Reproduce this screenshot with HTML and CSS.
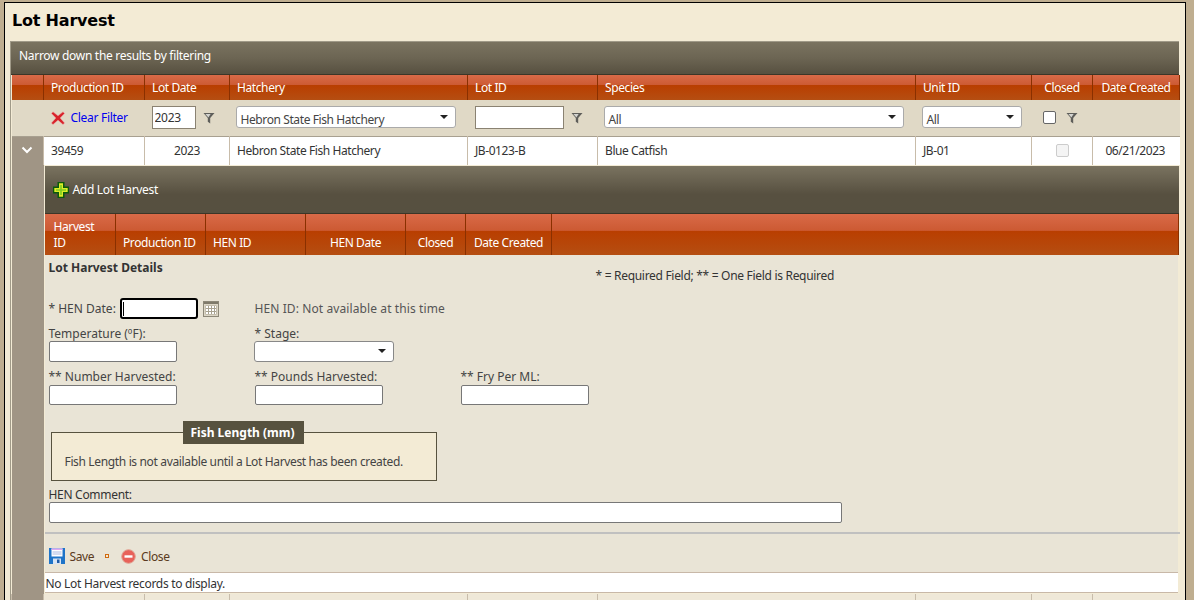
FILE: index.html
```html
<!DOCTYPE html>
<html lang="en">
<head>
    <meta charset="UTF-8">
    <title>Lot Harvest</title>
    <link rel="stylesheet" href="styles.css">
</head>
<body>
<div class="page">
    <h1 class="page-title">Lot Harvest</h1>
    <div class="grid">
        <div class="grid-caption">Narrow down the results by filtering</div>
        <table class="main-table">
            <colgroup>
                <col class="c-exp"><col class="c-prod"><col class="c-date"><col class="c-hatch"><col class="c-lot"><col class="c-species"><col class="c-unit"><col class="c-closed"><col class="c-created">
            </colgroup>
            <tr class="head-row">
                <th></th>
                <th>Production ID</th>
                <th>Lot Date</th>
                <th>Hatchery</th>
                <th>Lot ID</th>
                <th>Species</th>
                <th>Unit ID</th>
                <th class="center">Closed</th>
                <th class="center">Date Created</th>
            </tr>
            <tr class="filter-row">
                <td></td>
                <td>
                    <a class="clear-link" href="#">
                        <svg width="14" height="14" viewBox="0 0 14 14"><path d="M2 .8 L7 4.8 L12 .8 L13.6 2.4 L9.2 7 L13.6 12 L12 13.6 L7 9.2 L2 13.6 L.4 12 L4.8 7 L.4 2.4 Z" fill="#d8232a" stroke="#eeb0b0" stroke-width=".5"/></svg>
                        Clear Filter
                    </a>
                </td>
                <td>
                    <div class="filter-cell">
                        <input class="filter-input year" type="text" value="2023">
                        <svg class="funnel" width="12" height="12" viewBox="0 0 12 12"><path d="M.5 1 H11.5 L7.2 6 V11.5 L4.8 9.8 V6 Z" fill="#5e5e5a"/><path d="M2.4 2 H7.6 L5.4 5.6 Z" fill="#d4d4d0"/></svg>
                    </div>
                </td>
                <td><div class="combo hatch-combo"><span>Hebron State Fish Hatchery</span><i class="arrow"></i></div></td>
                <td>
                    <div class="filter-cell">
                        <input class="filter-input lot" type="text">
                        <svg class="funnel" width="12" height="12" viewBox="0 0 12 12"><path d="M.5 1 H11.5 L7.2 6 V11.5 L4.8 9.8 V6 Z" fill="#5e5e5a"/><path d="M2.4 2 H7.6 L5.4 5.6 Z" fill="#d4d4d0"/></svg>
                    </div>
                </td>
                <td><div class="combo species-combo"><span>All</span><i class="arrow"></i></div></td>
                <td><div class="combo unit-combo"><span>All</span><i class="arrow"></i></div></td>
                <td>
                    <div class="filter-cell">
                        <span class="check"></span>
                        <svg class="funnel" width="12" height="12" viewBox="0 0 12 12"><path d="M.5 1 H11.5 L7.2 6 V11.5 L4.8 9.8 V6 Z" fill="#5e5e5a"/><path d="M2.4 2 H7.6 L5.4 5.6 Z" fill="#d4d4d0"/></svg>
                    </div>
                </td>
                <td></td>
            </tr>
            <tr class="data-row">
                <td class="exp-cell" rowspan="2">
                    <svg class="chevron" width="12" height="8" viewBox="0 0 12 8"><path d="M1.5 1.5 L6 6 L10.5 1.5" fill="none" stroke="#fff" stroke-width="2"/></svg>
                </td>
                <td>39459</td>
                <td class="center">2023</td>
                <td>Hebron State Fish Hatchery</td>
                <td>JB-0123-B</td>
                <td>Blue Catfish</td>
                <td>JB-01</td>
                <td class="center"><span class="check disabled"></span></td>
                <td class="center">06/21/2023</td>
            </tr>
            <tr>
                <td class="nested-cell" colspan="8">
                    <div class="nested-toolbar">
                        <svg width="16" height="16" viewBox="0 0 16 16"><path d="M4.5 0 H11.5 V4.5 H16 V11.5 H11.5 V16 H4.5 V11.5 H0 V4.5 H4.5 Z" fill="#0b5a0b"/><path d="M6 1.3 H10 V6 H14.7 V10 H10 V14.7 H6 V10 H1.3 V6 H6 Z" fill="#dcec28"/><path d="M7.2 3 H8.8 V7.2 H13 V8.8 H8.8 V13 H7.2 V8.8 H3 V7.2 H7.2 Z" fill="#7ccc20"/></svg>
                        Add Lot Harvest
                    </div>
                    <table class="nested-table">
                        <colgroup>
                            <col class="n-id"><col class="n-prod"><col class="n-hen"><col class="n-date"><col class="n-closed"><col class="n-created"><col>
                        </colgroup>
                        <tr class="head-row nested-head">
                            <th class="wrap">Harvest<br>ID</th>
                            <th>Production ID</th>
                            <th>HEN ID</th>
                            <th class="center">HEN Date</th>
                            <th class="center">Closed</th>
                            <th class="center">Date Created</th>
                            <th></th>
                        </tr>
                    </table>
                    <div class="details">
                        <div class="details-top">
                            <h2 class="details-title">Lot Harvest Details</h2>
                            <p class="required-note">* = Required Field; ** = One Field is Required</p>
                        </div>
                        <div class="form-row date-row">
                            <div class="date-field">
                                <label>* HEN Date:</label>
                                <input class="focused" type="text">
                                <svg width="16" height="16" viewBox="0 0 16 16"><rect x=".5" y=".5" width="15" height="15" fill="#dcd6c6" stroke="#8d8878"/><rect x="1" y="1" width="14" height="2" fill="#7f7a6a"/><rect x="2.5" y="4.5" width="11" height="9" fill="#a8a290"/><path d="M3 5 H5 V7 H3 Z M6 5 H8 V7 H6 Z M9 5 H11 V7 H9 Z M12 5 H13 V7 H12 Z M3 8 H5 V10 H3 Z M6 8 H8 V10 H6 Z M9 8 H11 V10 H9 Z M12 8 H13 V10 H12 Z M3 11 H5 V13 H3 Z M6 11 H8 V13 H6 Z M9 11 H11 V13 H9 Z M12 11 H13 V13 H12 Z" fill="#fff"/></svg>
                            </div>
                            <div class="hen-id">HEN ID: Not available at this time</div>
                        </div>
                        <div class="form-row temp-row">
                            <div class="field">
                                <label>Temperature (ºF):</label>
                                <input type="text">
                            </div>
                            <div class="field">
                                <label>* Stage:</label>
                                <div class="combo stage-combo"><span></span><i class="arrow"></i></div>
                            </div>
                        </div>
                        <div class="form-row count-row">
                            <div class="field">
                                <label>** Number Harvested:</label>
                                <input type="text">
                            </div>
                            <div class="field">
                                <label>** Pounds Harvested:</label>
                                <input type="text">
                            </div>
                            <div class="field">
                                <label>** Fry Per ML:</label>
                                <input type="text">
                            </div>
                        </div>
                        <fieldset class="length-box">
                            <legend>Fish Length (mm)</legend>
                            Fish Length is not available until a Lot Harvest has been created.
                        </fieldset>
                        <div class="comment">
                            <label>HEN Comment:</label>
                            <input type="text">
                        </div>
                    </div>
                    <div class="actions">
                        <a href="#">
                            <svg width="16" height="16" viewBox="0 0 16 16"><path d="M0 0 H16 V16 H0 Z" fill="#1e74c8"/><rect x="2.5" y=".5" width="11" height="8" fill="#fff"/><rect x="2.5" y=".5" width="11" height="1.5" fill="#e0a8f0"/><path d="M3.5 4 H12.5 M3.5 6 H12.5" stroke="#a8b8e0"/><rect x="4" y="10.5" width="8" height="5.5" fill="#d8e4f4"/><rect x="8" y="11.5" width="2.5" height="3.5" fill="#1e5ca8"/></svg>
                            Save
                        </a>
                        <i class="dot"></i>
                        <a href="#">
                            <svg width="15" height="15" viewBox="0 0 15 15"><circle cx="7.5" cy="7.5" r="6.8" fill="#e8625a" stroke="#e0a090"/><rect x="3.5" y="6.3" width="8" height="2.4" fill="#fff"/></svg>
                            Close
                        </a>
                    </div>
                    <div class="no-records">No Lot Harvest records to display.</div>
                </td>
            </tr>
            <tr class="data-row alt-row">
                <td></td><td></td><td></td><td></td><td></td><td></td><td></td><td></td><td></td>
            </tr>
        </table>
    </div>
</div>
</body>
</html>
```

FILE: styles.css
```css
*{
    box-sizing: border-box;
}
html,body{
    margin: 0;
    height: 600px;
    overflow: hidden;
}
body{
    background: #bfae90;
    font-family: "Noto Sans", "Open Sans", sans-serif;
    font-size: 12px;
    letter-spacing: -0.3px;
    color: #333;
}
.page{
    margin: 2px 8px 0 4px;
    height: 598px;
    overflow: hidden;
    padding: 0 6px;
    background: #f3ebd5;
    border: 1px solid #000;
    border-bottom: 0;
}
.page-title{
    margin: 0;
    padding: 8px 0 0 1px;
    height: 38px;
    font-family: "DejaVu Sans", sans-serif;
    font-size: 16px;
    line-height: 20px;
    font-weight: bold;
    letter-spacing: -0.2px;
    color: #000;
}
.grid{
    border-top: 1px solid #a09a88;
    box-shadow: -1px 0 #a09a88;
}
.grid-caption{
    height: 33px;
    padding-left: 8px;
    line-height: 27px;
    color: #fff;
    background: linear-gradient(#7a7360, #6c6553 50%, #575040);
    border-bottom: 1px solid #3c3628;
}
table{
    border-collapse: collapse;
    border-spacing: 0;
    table-layout: fixed;
}
.main-table{
    width: 1168px;
}
.c-exp{ width: 32px; }
.c-prod{ width: 101px; }
.c-date{ width: 85px; }
.c-hatch{ width: 238px; }
.c-lot{ width: 130px; }
.c-species{ width: 318px; }
.c-unit{ width: 116px; }
.c-closed{ width: 61px; }
.c-created{ width: 87px; }
th{
    font-weight: normal;
    text-align: left;
    padding: 0 0 0 7px;
    color: #fff;
    letter-spacing: -0.4px;
    white-space: nowrap;
    border-left: 1px solid #d98050;
    border-right: 1px solid #8a3000;
}
.head-row{
    height: 25px;
    background: linear-gradient(#d96a48, #cc5a33 40%, #b93e00 42%, #b54e12);
}
.head-row th:first-child{
    border-left: 0;
}
th.center,td.center{
    padding: 0;
    text-align: center;
}
.filter-row{
    height: 36px;
    background: #e0d9c6;
    border-bottom: 1px solid #a8a090;
}
.filter-row td{
    padding: 0 7px;
}
.clear-link{
    display: flex;
    align-items: center;
    gap: 6px;
    color: #0000ee;
    text-decoration: none;
}
.filter-cell{
    display: flex;
    align-items: center;
    gap: 6px;
}
.filter-input{
    height: 23px;
    padding: 0 2px;
    font: inherit;
    letter-spacing: inherit;
    color: #333;
    border: 1px solid #8a8272;
    border-radius: 0;
    background: #fff;
}
.year{ width: 44px; }
.lot{ width: 89px; }
.funnel{
    flex: none;
    margin-left: 1px;
}
.combo{
    display: flex;
    align-items: flex-end;
    justify-content: space-between;
    height: 22px;
    margin-left: -1px;
    padding: 0 7px 0 4px;
    background: #fff;
    border: 1px solid #aaa;
    border-radius: 3px;
    color: #444;
    line-height: 14px;
    letter-spacing: -0.4px;
}
.filter-row .combo{
    margin-bottom: 2px;
}
.arrow{
    width: 0;
    height: 0;
    margin-bottom: 8px;
    border-top: 4px solid #222;
    border-left: 4px solid transparent;
    border-right: 4px solid transparent;
}
.hatch-combo{ width: 220px; }
.species-combo{ width: 300px; }
.unit-combo{ width: 100px; }
.stage-combo{ width: 140px; height: 21px; border-color: #888; }
.check{
    display: block;
    flex: none;
    width: 13px;
    height: 13px;
    margin: 0 3px 0 4px;
    background: #fff;
    border: 1px solid #666;
    border-radius: 2px;
}
.check.disabled{
    display: inline-block;
    margin: 0 0 3px;
    background: #f4f4f4;
    border-color: #ccc;
    vertical-align: middle;
}
.data-row{
    height: 29px;
    background: #fff;
    letter-spacing: -0.42px;
}
.data-row td{
    padding: 0 7px;
    border-left: 1px solid #c8bcaa;
}
.data-row td:last-child{
    padding-right: 9px;
}
.data-row .exp-cell{
    padding: 7px 0 0;
    background: #a09585;
    text-align: center;
    vertical-align: top;
    border-left: 0;
}
.chevron{
    display: block;
    margin: 2px auto 0;
}
.data-row .nested-cell{
    padding: 0 1px 0 1px;
    border-top: 1px solid #c8bcaa;
    background: #f3ebd5;
    letter-spacing: -0.3px;
}
.nested-toolbar{
    display: flex;
    align-items: center;
    gap: 4px;
    height: 48px;
    padding: 0 0 0 8px;
    color: #fff;
    background: linear-gradient(#7a7360, #575040 60%, #565040);
    border-bottom: 1px solid #3c3628;
}
.nested-table{
    width: 100%;
}
.n-id{ width: 71px; }
.n-prod{ width: 90px; }
.n-hen{ width: 100px; }
.n-date{ width: 100px; }
.n-closed{ width: 60px; }
.n-created{ width: 86px; }
.nested-head{
    height: 41px;
}
.nested-head th{
    padding-bottom: 4px;
    vertical-align: bottom;
    line-height: 16px;
}
.nested-head th.wrap{
    padding-left: 9px;
}
.details{
    height: 277px;
    margin-right: 1px;
    padding: 4px 0 0 4px;
    background: #e9e4d6;
}
.details-top{
    display: flex;
    height: 37px;
}
.details-title{
    margin: 0;
    width: 547px;
    font-size: 12px;
    line-height: 18px;
    font-weight: bold;
    letter-spacing: 0;
    color: #333;
}
.required-note{
    margin: 8px 0 0;
    line-height: 18px;
}
.form-row{
    display: flex;
}
.form-row label{
    letter-spacing: 0;
    color: #444;
}
.hen-id{
    letter-spacing: 0.1px;
    color: #555;
}
.date-row{
    height: 25px;
    align-items: center;
}
.date-field{
    display: flex;
    align-items: center;
    width: 206px;
}
.date-field label{
    width: 71px;
    flex: none;
}
.date-field svg{
    margin-left: 5px;
}
input{
    display: block;
    font: inherit;
    background: #fff;
    border: 1px solid #777;
    border-radius: 2px;
}
.date-field .focused{
    width: 78px;
    height: 21px;
    padding: 0;
    border: 2px solid #000;
    border-radius: 3px;
    background: linear-gradient(#000, #000) 1px 50% / 1px 14px no-repeat #fff;
}
.temp-row{
    margin-top: 5px;
    height: 43px;
}
.count-row{
    height: 48px;
}
.field{
    width: 206px;
}
.field label{
    display: block;
    height: 15px;
    line-height: 15px;
}
.field input{
    width: 128px;
    height: 21px;
}
.count-row label{
    height: 16px;
}
.count-row .field input{
    height: 20px;
}
.length-box{
    width: 386px;
    height: 60px;
    margin: 4px 0 0 2px;
    padding: 9px 13px 0;
    border: 1px solid #57523f;
    background: #f3ebd5;
    color: #444;
    letter-spacing: -0.35px;
}
.length-box legend{
    margin-left: 118px;
    padding: 0 9px 0 8px;
    height: 23px;
    line-height: 23px;
    font-weight: bold;
    letter-spacing: 0;
    color: #fff;
    background: #57523f;
}
.comment{
    margin-top: 7px;
}
.comment label{
    display: block;
    height: 14px;
    line-height: 14px;
}
.comment input{
    width: 793px;
    height: 21px;
}
.actions{
    display: flex;
    align-items: center;
    height: 40px;
    margin-right: -1px;
    padding: 6px 0 0 4px;
    background: #e9e4d6;
    border-top: 2px solid #c0c0c0;
    box-shadow: inset -2px 0 #f3ebd5;
    letter-spacing: -0.4px;
}
.actions a{
    display: flex;
    align-items: center;
    gap: 5px;
    color: #5a3a20;
    text-decoration: none;
}
.dot{
    width: 4px;
    height: 4px;
    margin: 0 12px 0 11px;
    border: 1px solid #d06a10;
    background: #f3ebd5;
}
.no-records{
    height: 21px;
    margin-right: 1px;
    padding: 1px 0 0 1px;
    line-height: 19px;
    background: #fff;
    border-top: 1px solid #c8b8a8;
    border-bottom: 1px solid #c8b8a8;
}
.data-row.alt-row{
    height: 8px;
    background: #efe8d8;
}
.alt-row td:first-child{
    background: #a09585;
}
```
